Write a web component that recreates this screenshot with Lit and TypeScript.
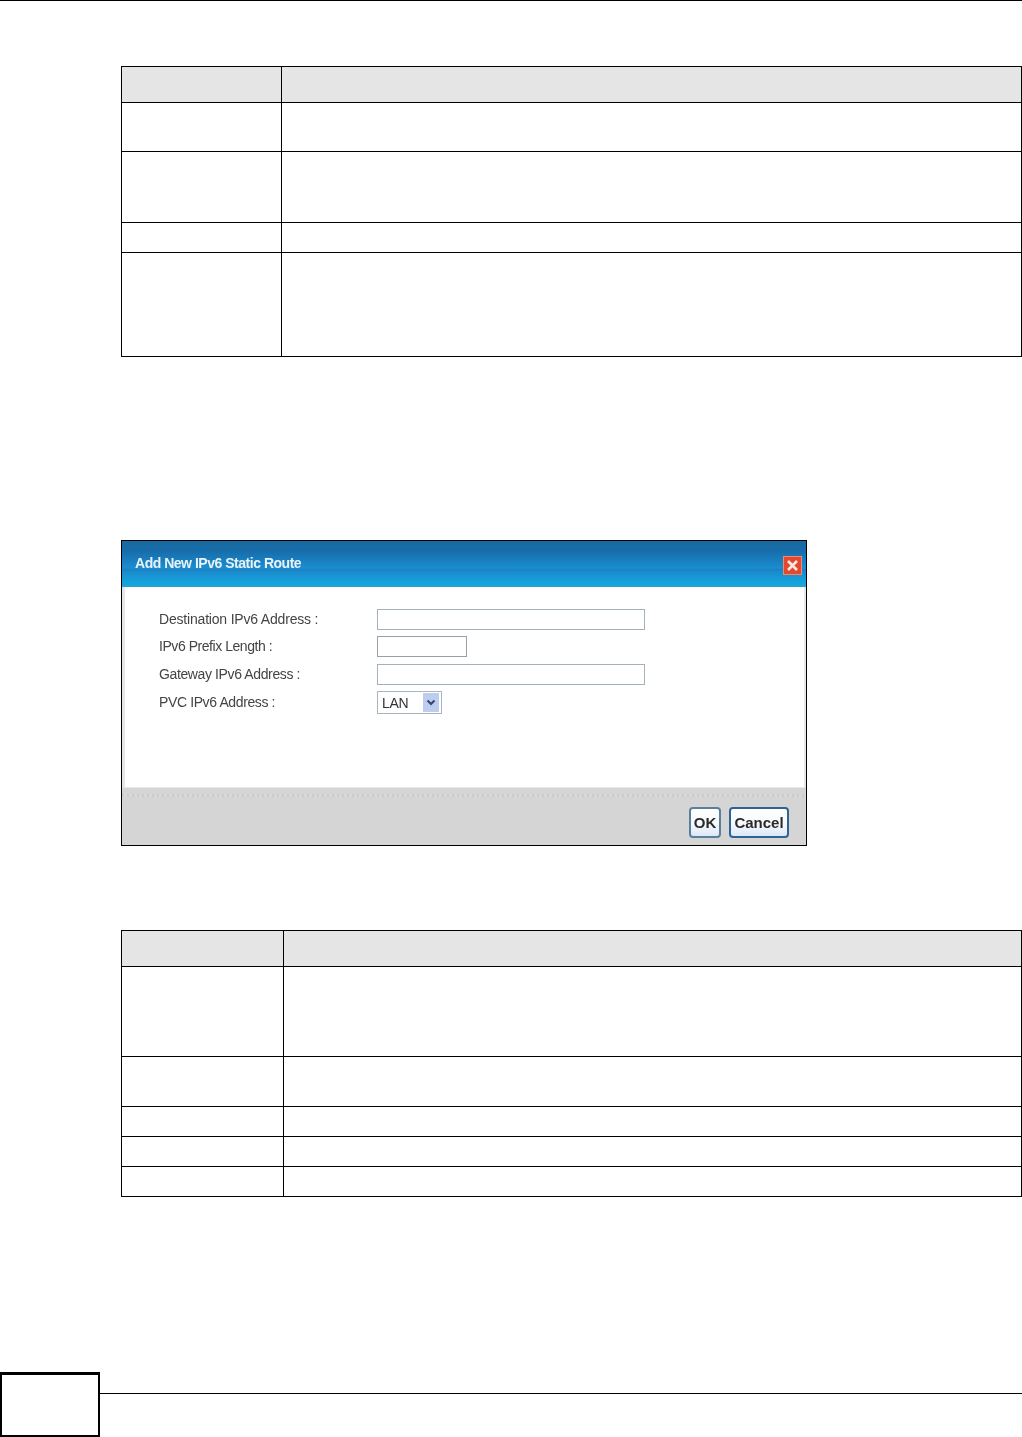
import { LitElement, html, css } from "lit";
import { customElement } from "lit/decorators.js";

const T1 = [49, 71, 30, 104];
const T2 = [90, 50, 30, 30, 30];

@customElement("app-root")
export class AppRoot extends LitElement {
  static styles = css`
    :host { display: block; width: 1022px; height: 1437px; background: #fff; font-family: "Liberation Sans", Arial, sans-serif; overflow: hidden; }
    .page { height: 1437px; display: flex; flex-direction: column; box-sizing: border-box; border-top: 1px solid #000; }

    .table { margin-left: 121px; width: 901px; box-sizing: border-box; border: 1px solid #000; }
    .t1 { margin-top: 65px; }
    .t2 { margin-top: 84px; }
    .row { display: grid; box-sizing: border-box; border-top: 1px solid #000; }
    .t1 .row { grid-template-columns: 159px 1fr; }
    .t2 .row { grid-template-columns: 161px 1fr; }
    .row > div + div { border-left: 1px solid #000; }
    .head { background: #e5e5e5; height: 35px; border-top: none !important; }

    .dialog { margin: 183px 0 0 121px; width: 686px; height: 306px; box-sizing: border-box; border: 1px solid #000; display: flex; flex-direction: column; background: #d5d5d5; }
    .bar { height: 46px; flex: none; box-sizing: border-box; padding: 14px 4px 0 13px; display: flex; justify-content: space-between; align-items: flex-start;
      background: linear-gradient(#1a6aa2 0%, #176ca8 20%, #1a8dd0 58%, #1b83c5 62%, #1a8fd0 70%, #13a8de 96%, #3d9dbd 100%); }
    .title { color: #e8f2f8; font-weight: bold; font-size: 14px; line-height: 17px; letter-spacing: -0.48px; filter: blur(0.4px); }
    .close { width: 19px; height: 19px; box-sizing: border-box; margin-top: 1px; display: block; filter: blur(0.4px); }

    .body { height: 201px; flex: none; background: #fff; box-sizing: border-box; border-style: solid; border-color: #e6e6e6; border-width: 0 2px 1px 3px; padding: 21.75px 0 0 34px; }
    .form { display: grid; grid-template-columns: 218px auto; justify-content: start; row-gap: 6.5px; align-items: center; }
    .label { font-size: 14px; line-height: 21px; color: #444; filter: blur(0.3px); }
    .input { height: 21px; box-sizing: border-box; border: 1px solid #a4b0ba; background: #fff; filter: blur(0.25px); }
    .wide { width: 268px; }
    .short { width: 90px; border-color: #9aa0a6; }
    .select { width: 65px; height: 23px; box-sizing: border-box; border: 1px solid #a9b5bf; background: #fff; display: flex; align-items: center; justify-content: space-between; padding: 0 2px 0 4px; font-size: 14px; letter-spacing: -0.3px; color: #333; filter: blur(0.3px); }
    .arrow { width: 16px; height: 19px; background: #bccdf0; display: flex; align-items: center; justify-content: center; }

    .foot { flex: 1; display: flex; flex-direction: column; }
    .dots { height: 3px; margin-top: 6px; background: repeating-linear-gradient(90deg, #cbcbcb 0 2px, #d8d8d8 2px 5px); flex: none; }
    .btns { display: flex; justify-content: flex-end; gap: 8px; margin-top: 10px; padding-right: 17px; }
    .btn { height: 31px; box-sizing: border-box; border: 2px solid #5a7f9b; border-radius: 4px; background: linear-gradient(#ffffff, #f6f9fd 55%, #dce8f6); font-size: 15px; font-weight: bold; color: #2a2a2a; display: flex; align-items: center; justify-content: center; filter: blur(0.3px); }
    .ok { width: 32px; }
    .cancel { width: 60px; border-color: #2f6296; }

    .footer { margin-top: auto; display: flex; align-items: flex-start; height: 65px; }
    .pagebox { width: 100px; height: 65px; box-sizing: border-box; border: solid #000; border-width: 3px 2px 2px 2px; flex: none; }
    .rule { flex: 1; height: 1px; background: #000; margin-top: 21px; }
  `;

  private rows(list: number[]) {
    return list.map(
      (h) => html`<div class="row" style="height:${h}px"><div></div><div></div></div>`
    );
  }

  private label(text: string, spacing: number) {
    return html`<div class="label" style="letter-spacing:${spacing}px">${text}</div>`;
  }

  render() {
    return html`
      <div class="page">
        <div class="table t1">
          <div class="row head"><div></div><div></div></div>
          ${this.rows(T1)}
        </div>

        <div class="dialog">
          <div class="bar">
            <span class="title">Add New IPv6 Static Route</span>
            <svg class="close" viewBox="0 0 19 19">
              <rect x="0.5" y="0.5" width="18" height="18" fill="#e2492f" stroke="#f08a70"/>
              <path d="M5 5l9 9M14 5l-9 9" stroke="#fdebe2" stroke-width="2.6" fill="none"/>
            </svg>
          </div>
          <div class="body">
            <div class="form">
              ${this.label("Destination IPv6 Address :", -0.19)}<div class="input wide"></div>
              ${this.label("IPv6 Prefix Length :", -0.45)}<div class="input short"></div>
              ${this.label("Gateway IPv6 Address :", -0.38)}<div class="input wide"></div>
              ${this.label("PVC IPv6 Address :", -0.38)}
              <div class="select"><span>LAN</span>
                <span class="arrow"><svg width="10" height="7" viewBox="0 0 10 7"><path d="M1.5 1.5L5 5l3.5-3.5" stroke="#33476b" stroke-width="2" fill="none"/></svg></span>
              </div>
            </div>
          </div>
          <div class="foot">
            <div class="dots"></div>
            <div class="btns">
              <div class="btn ok">OK</div>
              <div class="btn cancel">Cancel</div>
            </div>
          </div>
        </div>

        <div class="table t2">
          <div class="row head"><div></div><div></div></div>
          ${this.rows(T2)}
        </div>

        <div class="footer">
          <div class="pagebox"></div>
          <div class="rule"></div>
        </div>
      </div>
    `;
  }
}
